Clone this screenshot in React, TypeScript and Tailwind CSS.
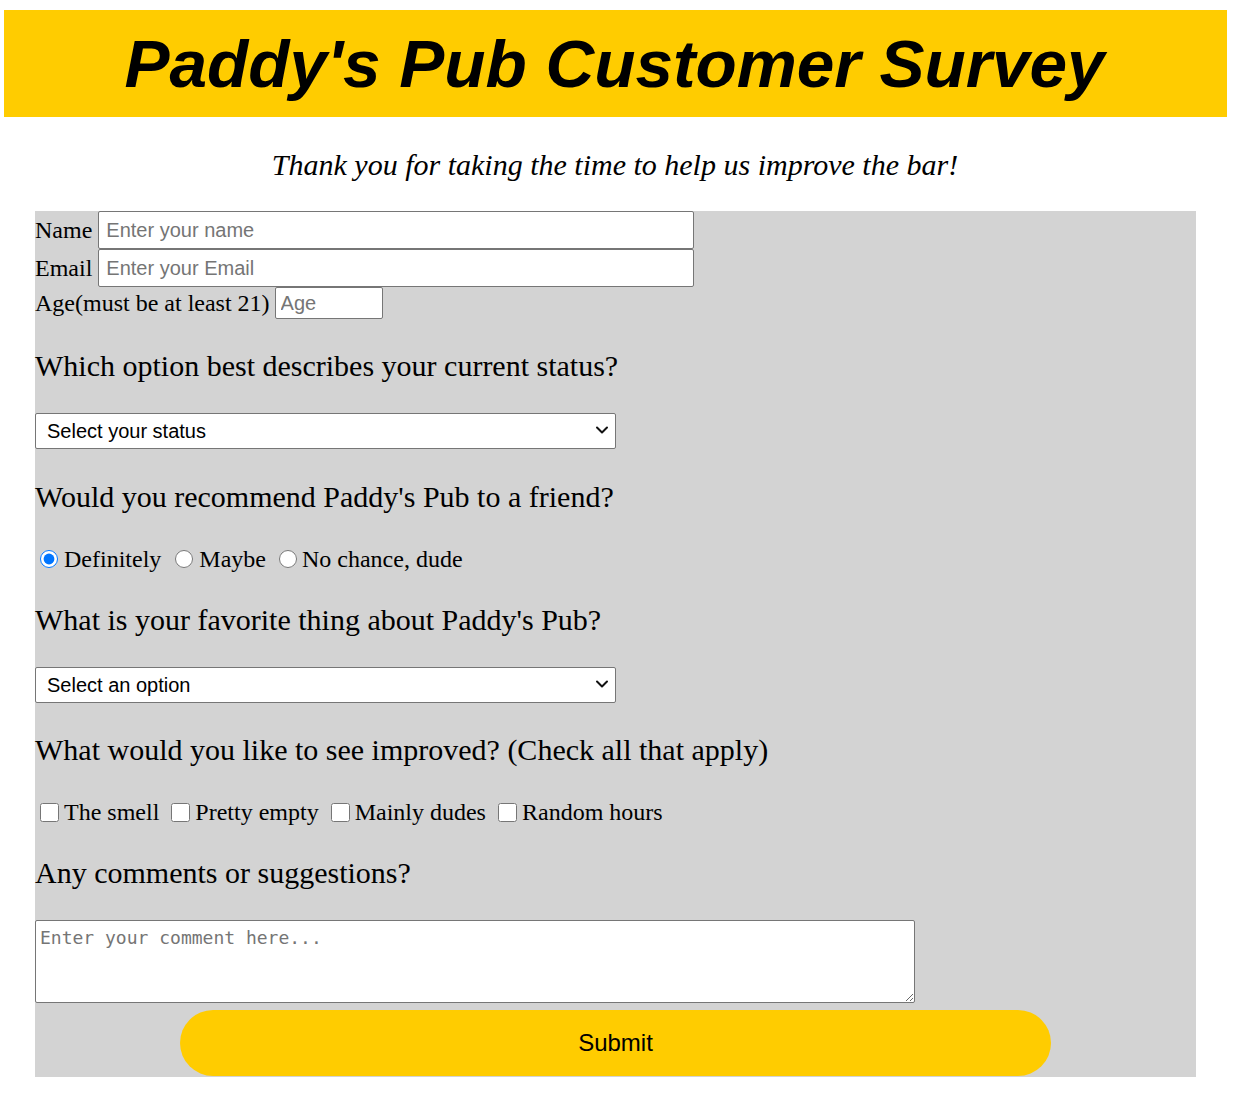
function Chevron() {
  return (
    <svg
      className="absolute right-[7px] top-1/2 -translate-y-1/2 pointer-events-none"
      width="14"
      height="8"
      viewBox="0 0 14 8"
      fill="none"
      stroke="#111"
      strokeWidth="2"
      strokeLinecap="round"
      strokeLinejoin="round"
    >
      <path d="M2 1.5 L7 6.5 L12 1.5" />
    </svg>
  )
}

function StatusSelect({ options }: { options: string[] }) {
  return (
    <div className="relative w-[581px] h-[36px]">
      <select className="appearance-none font-['Liberation_Sans',Arial,sans-serif] w-full h-full bg-white border border-[#767676] rounded-[2px] pl-[11px] pr-[28px] text-[20px] text-black">
        {options.map((o) => (
          <option key={o}>{o}</option>
        ))}
      </select>
      <Chevron />
    </div>
  )
}

export default function App() {
  const serif = "font-['Liberation_Serif','Times_New_Roman',serif]"
  const sans = "font-['Liberation_Sans',Arial,sans-serif]"
  const field = `${sans} bg-white border border-[#767676] rounded-[2px] text-[20px] text-black placeholder:text-[#757575]`
  return (
    <div className="bg-white min-h-[1098px] pt-[10px]">
      <header className="mx-[4px] w-[1223px] h-[107px] bg-[#ffcc00] flex items-center justify-center">
        <h1 className={`${sans} italic font-bold text-[67.5px] leading-none text-black pr-[2px]`}>
          Paddy's Pub Customer Survey
        </h1>
      </header>

      <p className={`${serif} italic text-[30px] leading-[34px] text-black text-center mt-[31px] mb-[29px] pr-[4px]`}>
        Thank you for taking the time to help us improve the bar!
      </p>

      <form className={`${serif} ml-[35px] w-[1161px] bg-[#d3d3d3] text-[24px] text-black flex flex-col`}>
        <div className="flex items-center h-[38px]">
          <label className="mr-[6px]">Name</label>
          <input type="text" placeholder="Enter your name" className={`${field} w-[596px] h-[38px] px-[7px]`} />
        </div>
        <div className="flex items-center h-[38px]">
          <label className="mr-[6px]">Email</label>
          <input type="email" placeholder="Enter your Email" className={`${field} w-[596px] h-[38px] px-[7px]`} />
        </div>
        <div className="flex items-center h-[32px]">
          <label className="mr-[5px]">Age(must be at least 21)</label>
          <input type="number" placeholder="Age" className={`${field} w-[108px] h-[32px] px-[5px]`} />
        </div>

        <p className="text-[30px] leading-[34px] mt-[30px] mb-[29px]">Which option best describes your current status?</p>
        <StatusSelect options={["Select your status", "Student", "Full-time job", "Unemployed"]} />

        <p className="text-[30px] leading-[34px] mt-[32px] mb-[31px]">Would you recommend Paddy's Pub to a friend?</p>
        <div className="flex items-center h-[28px] pl-[5px] gap-[14px]">
          <label className="flex items-center">
            <input type="radio" name="rec" defaultChecked className="w-[18px] h-[18px] mr-[6px] accent-[#0075ff]" />
            Definitely
          </label>
          <label className="flex items-center">
            <input type="radio" name="rec" className="w-[18px] h-[18px] mr-[6px]" />
            Maybe
          </label>
          <label className="flex items-center">
            <input type="radio" name="rec" className="w-[18px] h-[18px] mr-[5px] ml-[-1px]" />
            No chance, dude
          </label>
        </div>

        <p className="text-[30px] leading-[34px] mt-[30px] mb-[29px]">What is your favorite thing about Paddy's Pub?</p>
        <StatusSelect options={["Select an option", "The beer", "The atmosphere", "The staff"]} />

        <p className="text-[30px] leading-[34px] mt-[31px] mb-[31px]">What would you like to see improved? (Check all that apply)</p>
        <div className="flex items-center h-[28px] pl-[5px] gap-[12px]">
          {["The smell", "Pretty empty", "Mainly dudes", "Random hours"].map((t) => (
            <label key={t} className="flex items-center">
              <input type="checkbox" className="w-[19px] h-[19px] mr-[5px]" />
              {t}
            </label>
          ))}
        </div>

        <p className="text-[30px] leading-[34px] my-[30px]">Any comments or suggestions?</p>
        <textarea
          placeholder="Enter your comment here..."
          className="font-['DejaVu_Sans_Mono','Liberation_Mono',monospace] w-[880px] h-[83px] bg-white border border-[#767676] rounded-[2px] px-[4px] pt-[6px] text-[18px] leading-[22px] placeholder:text-[#757575]"
        />

        <button
          type="submit"
          className={`${sans} self-center w-[871px] h-[66px] mt-[7px] mb-[1px] bg-[#ffcc00] rounded-full text-[24px] text-black`}
        >
          Submit
        </button>
      </form>
    </div>
  )
}
